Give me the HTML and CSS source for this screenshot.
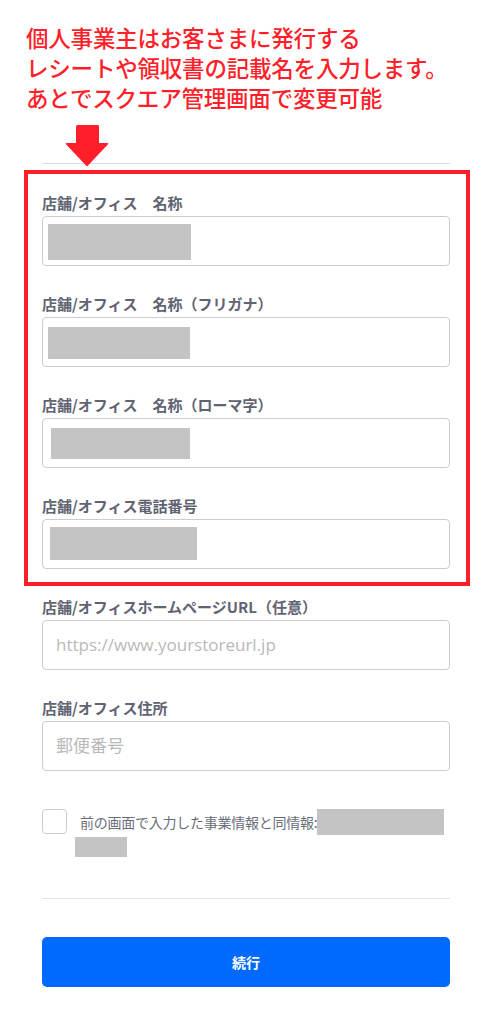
FILE: index.html
```html
<!DOCTYPE html>
<html lang="ja">
<head>
<meta charset="utf-8">
<title>店舗/オフィス情報</title>
<link rel="stylesheet" href="styles.css">
</head>
<body>
<div class="page">
  <div class="notice">
    <p>個人事業主はお客さまに発行する</p>
    <p>レシートや領収書の記載名を入力します。</p>
    <p>あとでスクエア管理画面で変更可能</p>
  </div>
  <div class="arrow-row">
    <svg class="arrow" width="44" height="42" viewBox="0 0 44 42">
      <path d="M11 1.5 Q11 0 12.5 0 H32.5 Q34 0 34 1.5 V18 H42.5 Q44 18 43 19.2 L23 40.5 Q22 41.5 21 40.5 L1 19.2 Q0 18 1.5 18 H11 Z" fill="#ff1f2a"/>
    </svg>
  </div>
  <div class="rule top-rule"></div>

  <div class="highlight">
    <div class="field">
      <div class="label">店舗/オフィス　名称</div>
      <div class="input"><span class="redact r1"></span></div>
    </div>
    <div class="field">
      <div class="label">店舗/オフィス　名称（フリガナ）</div>
      <div class="input"><span class="redact r2"></span></div>
    </div>
    <div class="field">
      <div class="label">店舗/オフィス　名称（ローマ字）</div>
      <div class="input"><span class="redact r3"></span></div>
    </div>
    <div class="field last">
      <div class="label">店舗/オフィス電話番号</div>
      <div class="input"><span class="redact r4"></span></div>
    </div>
  </div>

  <div class="field after-box">
    <div class="label">店舗/オフィスホームページURL（任意）</div>
    <div class="input"><span class="placeholder">https://www.yourstoreurl.jp</span></div>
  </div>
  <div class="field">
    <div class="label">店舗/オフィス住所</div>
    <div class="input"><span class="placeholder">郵便番号</span></div>
  </div>

  <div class="check-row">
    <span class="checkbox"></span>
    <div class="check-text">
      <div class="check-line1"><span class="check-label">前の画面で入力した事業情報と同情報:</span><span class="redact r5"></span></div>
      <div class="check-line2"><span class="redact r6"></span></div>
    </div>
  </div>

  <div class="rule bottom-rule"></div>

  <button class="continue" type="button">続行</button>
</div>
</body>
</html>
```

FILE: styles.css
```css
* { box-sizing: border-box; }

html, body {
  margin: 0;
  padding: 0;
  background: #ffffff;
}

body {
  font-family: "Noto Sans CJK JP", "Noto Sans", sans-serif;
}

.page {
  width: 492px;
  padding: 22px 42px 0 42px;
}

.notice {
  margin-left: -16px;
  color: #ff1f2a;
  font-size: 22.5px;
  line-height: 30px;
  font-weight: 500;
  letter-spacing: -0.2px;
}

.notice p {
  margin: 0;
  white-space: nowrap;
}

.arrow-row {
  margin-top: 13px;
  height: 38px;
  padding-left: 23px;
}

.arrow {
  display: block;
  overflow: visible;
}

.rule {
  height: 1px;
  width: 408px;
}

.top-rule {
  background: #d9dde5;
}

.highlight {
  margin: 6px -20px 0 -18px;
  border: 4px solid #ff1f2a;
  padding: 19px 16px 13px 14px;
}

.field {
  margin-bottom: 28px;
}

.field.last {
  margin-bottom: 0;
}

.field.after-box {
  margin-top: 11px;
}

.label {
  color: #5f6372;
  font-size: 15px;
  line-height: 20px;
  font-weight: 700;
  margin-bottom: 3px;
  white-space: nowrap;
}

.input {
  height: 50px;
  width: 408px;
  border: 1px solid #cccccc;
  border-radius: 4px;
  display: flex;
  align-items: center;
  padding-left: 13px;
  position: relative;
}

.placeholder {
  color: #b9b9b9;
  font-family: "Open Sans", "Noto Sans CJK JP", sans-serif;
  font-size: 17px;
  line-height: 24px;
}

.redact {
  display: inline-block;
  background: #c4c4c4;
}

.input .redact {
  position: absolute;
}

.r1 { left: 5px; top: 7px; width: 143px; height: 36px; }
.r2 { left: 5px; top: 9px; width: 142px; height: 32px; }
.r3 { left: 8px; top: 9px; width: 139px; height: 31px; }
.r4 { left: 7px; top: 7px; width: 147px; height: 33px; }

.check-row {
  margin-top: 38px;
  display: flex;
  align-items: flex-start;
  gap: 8px;
}

.checkbox {
  flex: none;
  width: 25px;
  height: 25px;
  border: 1px solid #cccccc;
  border-radius: 4px;
  background: #fff;
}

.check-text {
  flex: 1;
  color: #6a6e7a;
  font-size: 14px;
}

.check-line1 {
  display: flex;
  align-items: center;
  height: 26px;
  padding-left: 5px;
}

.check-label {
  line-height: 26px;
  white-space: nowrap;
  letter-spacing: -0.25px;
}

.r5 { width: 127px; height: 26px; }

.check-line2 {
  margin-top: 2px;
  height: 20px;
}

.r6 { width: 52px; height: 20px; display: block; }

.bottom-rule {
  margin-top: 41px;
  background: #e3e3e3;
}

.continue {
  display: block;
  margin-top: 38px;
  width: 408px;
  height: 50px;
  border: none;
  border-radius: 5px;
  background: #006aff;
  color: #ffffff;
  font-family: "Noto Sans CJK JP", sans-serif;
  font-size: 14px;
  font-weight: 700;
  cursor: pointer;
}
```
